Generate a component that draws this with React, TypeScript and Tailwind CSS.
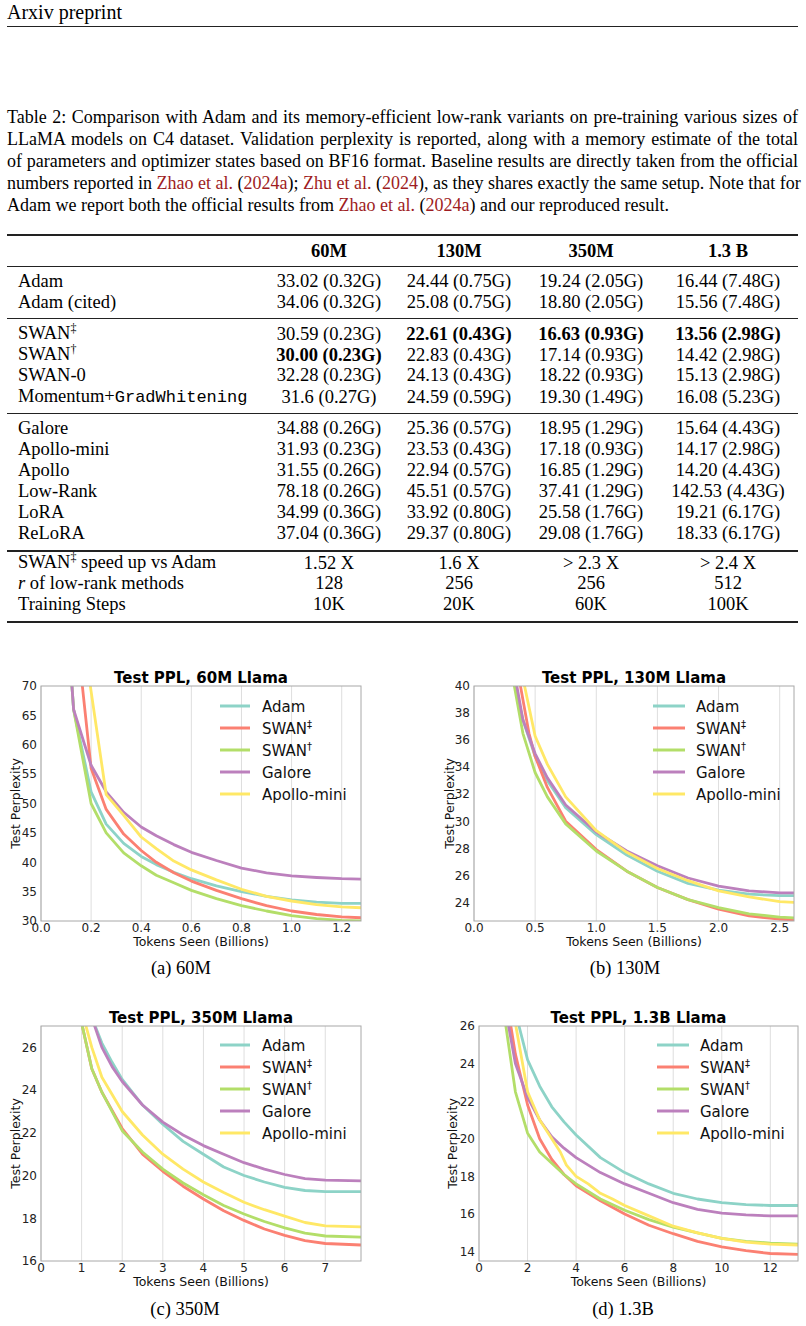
type Pt = [number, number];
type Series = { name: string; sup?: string; color: string; pts: Pt[] };

const C = {
  adam: "#8dd3c7",
  swan2: "#fb8072",
  swan1: "#b3de69",
  galore: "#bc80bd",
  apollo: "#ffe866",
};

type ChartCfg = {
  id: string;
  title: string;
  x0: number;
  x1: number;
  y0: number;
  y1: number;
  xmax: number;
  ymin: number;
  ymax: number;
  xticks: number[];
  xdec: number;
  yticks: number[];
  ylabelX: number;
  leg: { l0: number; l1: number; tx: number; ys: number[] };
  series: Series[];
};

function mk(adam: Pt[], swan2: Pt[], swan1: Pt[], galore: Pt[], apollo: Pt[]): Series[] {
  return [
    { name: "Adam", color: C.adam, pts: adam },
    { name: "SWAN", sup: "‡", color: C.swan2, pts: swan2 },
    { name: "SWAN", sup: "†", color: C.swan1, pts: swan1 },
    { name: "Galore", color: C.galore, pts: galore },
    { name: "Apollo-mini", color: C.apollo, pts: apollo },
  ];
}

const range = (a: number, b: number, s: number) => {
  const out: number[] = [];
  for (let v = a; v <= b + 1e-9; v += s) out.push(Math.round(v * 100) / 100);
  return out;
};

const charts: ChartCfg[] = [
  {
    id: "c1",
    title: "Test PPL, 60M Llama",
    x0: 41, x1: 361, y0: 22, y1: 257,
    xmax: 1.277, ymin: 30, ymax: 70,
    xticks: range(0, 1.2, 0.2), xdec: 1,
    yticks: range(30, 70, 5),
    ylabelX: 16,
    leg: { l0: 220, l1: 250, tx: 262, ys: [42, 64, 86, 108, 130] },
    series: mk(
      [[0.12, 72], [0.13, 66], [0.2, 52], [0.26, 46.5], [0.33, 43.2], [0.4, 41], [0.46, 39.6], [0.53, 38.3], [0.6, 37.2], [0.7, 36], [0.8, 35], [0.9, 34.2], [1.0, 33.6], [1.1, 33.2], [1.2, 33], [1.31, 33]],
      [[0.16, 72], [0.2, 56], [0.26, 49], [0.33, 44.8], [0.4, 42], [0.46, 40], [0.53, 38.2], [0.6, 36.8], [0.7, 35.2], [0.8, 33.8], [0.9, 32.6], [1.0, 31.7], [1.1, 31.1], [1.2, 30.7], [1.31, 30.5]],
      [[0.12, 72], [0.13, 66], [0.2, 50], [0.26, 45], [0.33, 41.6], [0.4, 39.4], [0.46, 37.8], [0.53, 36.5], [0.6, 35.2], [0.7, 33.8], [0.8, 32.6], [0.9, 31.7], [1.0, 30.9], [1.1, 30.4], [1.2, 30.1], [1.31, 30]],
      [[0.12, 72], [0.13, 66], [0.2, 56.5], [0.26, 52], [0.33, 48.5], [0.4, 46], [0.46, 44.5], [0.53, 43], [0.6, 41.7], [0.7, 40.3], [0.8, 39], [0.9, 38.2], [1.0, 37.7], [1.1, 37.4], [1.2, 37.2], [1.31, 37.1]],
      [[0.19, 72], [0.26, 51.5], [0.33, 48], [0.4, 44.3], [0.46, 42.3], [0.53, 40.2], [0.6, 38.7], [0.7, 37], [0.8, 35.4], [0.9, 34.2], [1.0, 33.4], [1.1, 32.8], [1.2, 32.4], [1.31, 32.2]]
    ),
  },
  {
    id: "c2",
    title: "Test PPL, 130M Llama",
    x0: 71, x1: 391, y0: 22, y1: 257,
    xmax: 2.617, ymin: 22.62, ymax: 40,
    xticks: range(0, 2.5, 0.5), xdec: 1,
    yticks: range(24, 40, 2),
    ylabelX: 47,
    leg: { l0: 250, l1: 282, tx: 293, ys: [42, 64, 86, 108, 130] },
    series: mk(
      [[0.31, 41], [0.4, 37.5], [0.5, 34.8], [0.6, 33], [0.75, 31], [1.0, 29], [1.25, 27.5], [1.5, 26.3], [1.75, 25.4], [2.0, 24.9], [2.25, 24.6], [2.5, 24.5], [2.62, 24.5]],
      [[0.36, 41], [0.45, 36.5], [0.5, 34.8], [0.6, 32.5], [0.75, 30], [1.0, 27.9], [1.25, 26.3], [1.5, 25.1], [1.75, 24.2], [2.0, 23.5], [2.25, 23], [2.5, 22.75], [2.62, 22.7]],
      [[0.31, 41], [0.4, 36.5], [0.5, 33.6], [0.6, 31.8], [0.75, 29.8], [1.0, 27.8], [1.25, 26.3], [1.5, 25.1], [1.75, 24.2], [2.0, 23.6], [2.25, 23.15], [2.5, 22.9], [2.62, 22.85]],
      [[0.33, 41], [0.4, 37.5], [0.5, 35], [0.6, 33.2], [0.75, 31.2], [1.0, 29.2], [1.25, 27.8], [1.5, 26.7], [1.75, 25.8], [2.0, 25.2], [2.25, 24.85], [2.5, 24.7], [2.62, 24.7]],
      [[0.39, 41], [0.5, 36.3], [0.6, 34.2], [0.75, 31.8], [1.0, 29.3], [1.25, 27.7], [1.5, 26.5], [1.75, 25.6], [2.0, 24.85], [2.25, 24.4], [2.5, 24.05], [2.62, 24]]
    ),
  },
  {
    id: "c3",
    title: "Test PPL, 350M Llama",
    x0: 41, x1: 361, y0: 22, y1: 257,
    xmax: 7.88, ymin: 16, ymax: 27,
    xticks: range(0, 7, 1), xdec: 0,
    yticks: range(16, 26, 2),
    ylabelX: 16,
    leg: { l0: 220, l1: 250, tx: 262, ys: [41, 63, 85, 107, 129] },
    series: mk(
      [[1.25, 27.4], [1.5, 26.2], [1.75, 25.3], [2, 24.5], [2.5, 23.3], [3, 22.4], [3.5, 21.6], [4, 21], [4.5, 20.4], [5, 20], [5.5, 19.7], [6, 19.45], [6.5, 19.3], [7, 19.25], [7.88, 19.25]],
      [[0.97, 27.4], [1.25, 25], [1.5, 23.9], [2, 22.2], [2.5, 21], [3, 20.2], [3.5, 19.5], [4, 18.9], [4.5, 18.35], [5, 17.9], [5.5, 17.5], [6, 17.2], [6.5, 16.95], [7, 16.82], [7.88, 16.75]],
      [[0.97, 27.4], [1.25, 25], [1.5, 23.9], [2, 22.1], [2.5, 21.1], [3, 20.3], [3.5, 19.65], [4, 19.1], [4.5, 18.6], [5, 18.2], [5.5, 17.85], [6, 17.55], [6.5, 17.3], [7, 17.17], [7.88, 17.12]],
      [[1.25, 27.4], [1.5, 26], [1.75, 25.1], [2, 24.4], [2.5, 23.3], [3, 22.5], [3.5, 21.9], [4, 21.4], [4.5, 21], [5, 20.6], [5.5, 20.3], [6, 20.05], [6.5, 19.85], [7, 19.78], [7.88, 19.75]],
      [[1.05, 27.4], [1.25, 26], [1.5, 24.6], [2, 23], [2.5, 21.9], [3, 21], [3.5, 20.3], [4, 19.7], [4.5, 19.2], [5, 18.75], [5.5, 18.4], [6, 18.1], [6.5, 17.8], [7, 17.65], [7.88, 17.6]]
    ),
  },
  {
    id: "c4",
    title: "Test PPL, 1.3B Llama",
    x0: 76, x1: 395, y0: 22, y1: 257,
    xmax: 13.14, ymin: 13.5, ymax: 26,
    xticks: range(0, 12, 2), xdec: 0,
    yticks: range(14, 26, 2),
    ylabelX: 50,
    leg: { l0: 254, l1: 286, tx: 297, ys: [41, 63, 85, 107, 129] },
    series: mk(
      [[1.55, 26.5], [2, 24.2], [2.5, 22.8], [3, 21.7], [3.5, 20.9], [4, 20.2], [5, 19], [6, 18.2], [7, 17.6], [8, 17.1], [9, 16.8], [10, 16.6], [11, 16.5], [12, 16.45], [13.14, 16.45]],
      [[1.25, 26.5], [1.5, 24.5], [2, 21.8], [2.5, 20], [3, 18.9], [3.5, 18.1], [4, 17.5], [5, 16.7], [6, 16], [7, 15.4], [8, 14.95], [9, 14.55], [10, 14.25], [11, 14.05], [12, 13.9], [13.14, 13.85]],
      [[1.05, 26.5], [1.5, 22.5], [2, 20.3], [2.5, 19.3], [3, 18.7], [3.5, 18.1], [4, 17.6], [5, 16.8], [6, 16.2], [7, 15.7], [8, 15.3], [9, 15], [10, 14.7], [11, 14.55], [12, 14.45], [13.14, 14.4]],
      [[1.15, 26.5], [1.5, 24], [2, 22.2], [2.5, 21], [3, 20.1], [3.5, 19.5], [4, 19], [5, 18.2], [6, 17.6], [7, 17.1], [8, 16.6], [9, 16.25], [10, 16.05], [11, 15.95], [12, 15.9], [13.14, 15.9]],
      [[1.45, 26.5], [2, 22.5], [2.5, 21], [3, 20], [3.35, 19.3], [3.6, 18.6], [4, 18], [4.5, 17.6], [5, 17.1], [5.5, 16.8], [6, 16.45], [7, 15.9], [8, 15.35], [9, 15], [10, 14.7], [11, 14.5], [12, 14.4], [13.14, 14.35]]
    ),
  },
];

const SANS = "DejaVu Sans, Verdana, sans-serif";

function Chart({ cfg }: { cfg: ChartCfg }) {
  const sx = (v: number) => cfg.x0 + (v / cfg.xmax) * (cfg.x1 - cfg.x0);
  const sy = (v: number) => cfg.y1 - ((v - cfg.ymin) / (cfg.ymax - cfg.ymin)) * (cfg.y1 - cfg.y0);
  const cx = (cfg.x0 + cfg.x1) / 2;
  const cy = (cfg.y0 + cfg.y1) / 2;
  return (
    <svg width={403} height={290} viewBox="0 0 403 290" className="block">
      <defs>
        <clipPath id={cfg.id}>
          <rect x={cfg.x0} y={cfg.y0} width={cfg.x1 - cfg.x0} height={cfg.y1 - cfg.y0} />
        </clipPath>
      </defs>
      <text x={cx} y={18.5} textAnchor="middle" fontFamily={SANS} fontWeight="bold" fontSize={15} fill="#000">
        {cfg.title}
      </text>
      {cfg.xticks.map((t) => (
        <line key={"g" + t} x1={sx(t)} x2={sx(t)} y1={cfg.y0} y2={cfg.y1} stroke="#dedede" strokeWidth={1} />
      ))}
      <g clipPath={`url(#${cfg.id})`} fill="none" strokeWidth={2.8} strokeLinejoin="round">
        {cfg.series.map((s, i) => (
          <path
            key={i}
            stroke={s.color}
            d={s.pts.map((p, j) => `${j ? "L" : "M"}${sx(p[0]).toFixed(1)},${sy(p[1]).toFixed(1)}`).join(" ")}
          />
        ))}
      </g>
      <rect x={cfg.x0} y={cfg.y0} width={cfg.x1 - cfg.x0} height={cfg.y1 - cfg.y0} fill="none" stroke="#a8a8a8" strokeWidth={1} />
      {cfg.yticks.map((t) => (
        <text key={"y" + t} x={cfg.x0 - 4} y={sy(t) + 4.3} textAnchor="end" fontFamily={SANS} fontSize={12} fill="#222">
          {t}
        </text>
      ))}
      {cfg.xticks.map((t) => (
        <text key={"x" + t} x={sx(t)} y={cfg.y1 + 10.5} textAnchor="middle" fontFamily={SANS} fontSize={12} fill="#222">
          {t.toFixed(cfg.xdec)}
        </text>
      ))}
      <text x={cx} y={cfg.y1 + 25} textAnchor="middle" fontFamily={SANS} fontSize={12.5} fill="#111">
        Tokens Seen (Billions)
      </text>
      <text
        x={0}
        y={0}
        transform={`translate(${cfg.ylabelX + 4},${cy}) rotate(-90)`}
        textAnchor="middle"
        fontFamily={SANS}
        fontSize={12.5}
        fill="#111"
      >
        Test Perplexity
      </text>
      {cfg.series.map((s, i) => (
        <g key={"l" + i}>
          <line x1={cfg.leg.l0} x2={cfg.leg.l1} y1={cfg.leg.ys[i]} y2={cfg.leg.ys[i]} stroke={s.color} strokeWidth={3} />
          <text x={cfg.leg.tx} y={cfg.leg.ys[i] + 5.5} fontFamily={SANS} fontSize={15} fill="#111">
            {s.name}
            {s.sup && (
              <tspan fontSize={10} dy={-6}>
                {s.sup}
              </tspan>
            )}
          </text>
        </g>
      ))}
    </svg>
  );
}

const Cite = ({ who, year }: { who: string; year: string }) => (
  <>
    <span className="text-[#9e1c22]">{who}</span> (<span className="text-[#9e1c22]">{year}</span>)
  </>
);

const Dag = ({ s }: { s: string }) => <span className="relative -top-[7px] text-[12px]">{s}</span>;

function Row({ label, cells, bold = [] }: { label: React.ReactNode; cells: string[]; bold?: number[] }) {
  return (
    <div className="grid h-[21px] grid-cols-[257px_130px_130px_134px_140px] items-center leading-[21px]">
      <div className="pl-[11px] whitespace-nowrap">{label}</div>
      {cells.map((c, i) => (
        <div key={i} className={"text-center whitespace-nowrap" + (bold.includes(i) ? " font-bold" : "")}>
          {c}
        </div>
      ))}
    </div>
  );
}

export default function App() {
  return (
    <div className="w-[806px] overflow-hidden bg-white text-black font-['Liberation_Serif',serif]">
      <div className="px-[7px] pr-[8px]">
        <div className="h-[26px] text-[20px] leading-[24px]">Arxiv preprint</div>
        <div className="h-px bg-[#222]" />

        <div className="mt-[79px] text-[18px] leading-[22px]">
          <div className="whitespace-nowrap text-justify [text-align-last:justify]">
            Table 2: Comparison with Adam and its memory-efficient low-rank variants on pre-training various sizes of
          </div>
          <div className="whitespace-nowrap text-justify [text-align-last:justify]">
            LLaMA models on C4 dataset. Validation perplexity is reported, along with a memory estimate of the total
          </div>
          <div className="whitespace-nowrap text-justify [text-align-last:justify]">
            of parameters and optimizer states based on BF16 format. Baseline results are directly taken from the official
          </div>
          <div className="whitespace-nowrap text-justify [text-align-last:justify]">
            numbers reported in <Cite who="Zhao et al." year="2024a" />; <Cite who="Zhu et al." year="2024" />, as they shares exactly the same setup. Note that for
          </div>
          <div className="whitespace-nowrap">
            Adam we report both the official results from <Cite who="Zhao et al." year="2024a" /> and our reproduced result.
          </div>
        </div>

        <div className="mt-[18px] w-[791px] text-[18.5px]">
          <div className="h-[2px] bg-[#222]" />
          <div className="grid h-[30px] grid-cols-[257px_130px_130px_134px_140px] items-center pt-[1px] font-bold leading-[21px]">
            <div />
            <div className="text-center">60M</div>
            <div className="text-center">130M</div>
            <div className="text-center">350M</div>
            <div className="text-center">1.3 B</div>
          </div>
          <div className="h-px bg-[#222]" />
          <div className="pt-[4px] pb-[5px]">
            <Row label="Adam" cells={["33.02 (0.32G)", "24.44 (0.75G)", "19.24 (2.05G)", "16.44 (7.48G)"]} />
            <Row label="Adam (cited)" cells={["34.06 (0.32G)", "25.08 (0.75G)", "18.80 (2.05G)", "15.56 (7.48G)"]} />
          </div>
          <div className="h-px bg-[#222]" />
          <div className="pt-[4px] pb-[6px]">
            <Row label={<>SWAN<Dag s="‡" /></>} cells={["30.59 (0.23G)", "22.61 (0.43G)", "16.63 (0.93G)", "13.56 (2.98G)"]} bold={[1, 2, 3]} />
            <Row label={<>SWAN<Dag s="†" /></>} cells={["30.00 (0.23G)", "22.83 (0.43G)", "17.14 (0.93G)", "14.42 (2.98G)"]} bold={[0]} />
            <Row label="SWAN-0" cells={["32.28 (0.23G)", "24.13 (0.43G)", "18.22 (0.93G)", "15.13 (2.98G)"]} />
            <Row
              label={
                <>
                  Momentum+<span className="font-['Liberation_Mono',monospace] text-[17px]">GradWhitening</span>
                </>
              }
              cells={["31.6 (0.27G)", "24.59 (0.59G)", "19.30 (1.49G)", "16.08 (5.23G)"]}
            />
          </div>
          <div className="h-px bg-[#222]" />
          <div className="pt-[4px] pb-[6px]">
            <Row label="Galore" cells={["34.88 (0.26G)", "25.36 (0.57G)", "18.95 (1.29G)", "15.64 (4.43G)"]} />
            <Row label="Apollo-mini" cells={["31.93 (0.23G)", "23.53 (0.43G)", "17.18 (0.93G)", "14.17 (2.98G)"]} />
            <Row label="Apollo" cells={["31.55 (0.26G)", "22.94 (0.57G)", "16.85 (1.29G)", "14.20 (4.43G)"]} />
            <Row label="Low-Rank" cells={["78.18 (0.26G)", "45.51 (0.57G)", "37.41 (1.29G)", "142.53 (4.43G)"]} />
            <Row label="LoRA" cells={["34.99 (0.36G)", "33.92 (0.80G)", "25.58 (1.76G)", "19.21 (6.17G)"]} />
            <Row label="ReLoRA" cells={["37.04 (0.36G)", "29.37 (0.80G)", "29.08 (1.76G)", "18.33 (6.17G)"]} />
          </div>
          <div className="h-[2px] bg-[#222]" />
          <div className="pb-[6px]">
            <Row label={<>SWAN<Dag s="‡" /> speed up vs Adam</>} cells={["1.52 X", "1.6 X", "> 2.3 X", "> 2.4 X"]} />
            <Row label={<><i>r</i> of low-rank methods</>} cells={["128", "256", "256", "512"]} />
            <Row label="Training Steps" cells={["10K", "20K", "60K", "100K"]} />
          </div>
          <div className="h-[2px] bg-[#222]" />
        </div>
      </div>

      <div className="mt-[41px] grid grid-cols-2">
        <div>
          <Chart cfg={charts[0]} />
          <div className="h-[50px] w-[362px] pt-[3px] text-center text-[18.5px] leading-[22px]">(a) 60M</div>
        </div>
        <div>
          <Chart cfg={charts[1]} />
          <div className="h-[50px] w-[444px] pt-[3px] text-center text-[18.5px] leading-[22px]">(b) 130M</div>
        </div>
        <div>
          <Chart cfg={charts[2]} />
          <div className="h-[36px] w-[370px] pt-[4px] text-center text-[18.5px] leading-[22px]">(c) 350M</div>
        </div>
        <div>
          <Chart cfg={charts[3]} />
          <div className="h-[36px] w-[440px] pt-[4px] text-center text-[18.5px] leading-[22px]">(d) 1.3B</div>
        </div>
      </div>
    </div>
  );
}
